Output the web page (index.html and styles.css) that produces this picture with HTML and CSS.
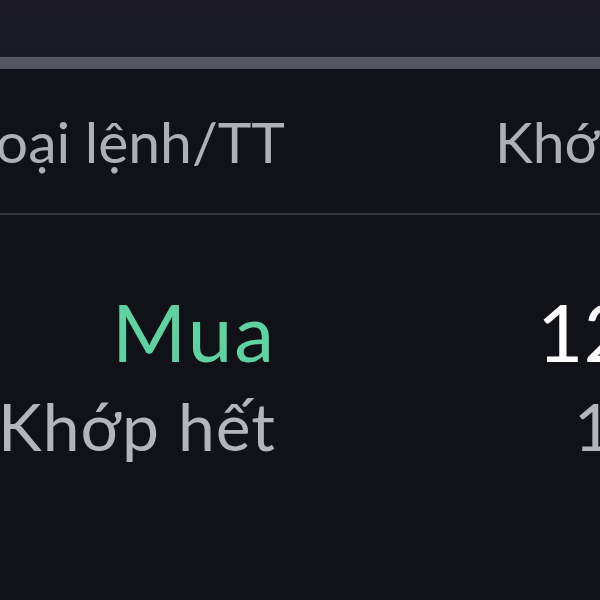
FILE: index.html
```html
<!DOCTYPE html>
<html lang="vi">
<head>
    <meta charset="UTF-8">
    <meta name="viewport" content="width=device-width, initial-scale=1.0">
    <title>Lệnh</title>
    <link rel="stylesheet" href="styles.css">
</head>
<body>
    <div class="topbar"></div>
    <div class="handle"></div>
    <main class="orders">
        <div class="row head">
            <div class="col type">Loại lệnh/TT</div>
            <div class="col match">Khớp/Đặt</div>
        </div>
        <div class="row item">
            <div class="col type">
                <div class="side buy">Mua</div>
                <div class="status">Khớp hết</div>
            </div>
            <div class="col match">
                <div class="qty">12,000</div>
                <div class="sub">1,000</div>
            </div>
        </div>
    </main>
</body>
</html>
```

FILE: styles.css
```css
body,
html {
    margin: 0;
    padding: 0;
    width: 100%;
    height: 100%;
    overflow: hidden;
    background: #111217;
    font-family: "Lato", "Noto Sans", sans-serif;
}

.topbar {
    height: 57px;
    background: linear-gradient(#1c1b25, #181a22);
}

.handle {
    height: 12px;
    background: #545760;
}

.orders {
    width: 1200px;
    margin-left: -120px;
}

.row {
    display: flex;
}

.col {
    flex-shrink: 0;
}

.col.type {
    text-align: right;
}

.col.match {
    padding-left: 210px;
    white-space: nowrap;
}

.head {
    height: 144px;
    align-items: center;
    border-bottom: 2px solid #34353c;
    color: #aeb0b7;
    font-size: 57px;
}

.head .type {
    width: 405px;
}

.item {
    padding-top: 68px;
}

.item .type {
    width: 396px;
}

.side {
    font-size: 80px;
    line-height: 96px;
    letter-spacing: 2px;
}

.buy {
    color: #5ed3a1;
}

.status {
    font-size: 66px;
    line-height: 94px;
    letter-spacing: 1px;
    color: #b3b5bb;
}

.qty {
    font-size: 80px;
    line-height: 96px;
    color: #ffffff;
    padding-left: 51px;
}

.sub {
    font-size: 66px;
    line-height: 94px;
    color: #b3b5bb;
    padding-left: 88px;
}
```
